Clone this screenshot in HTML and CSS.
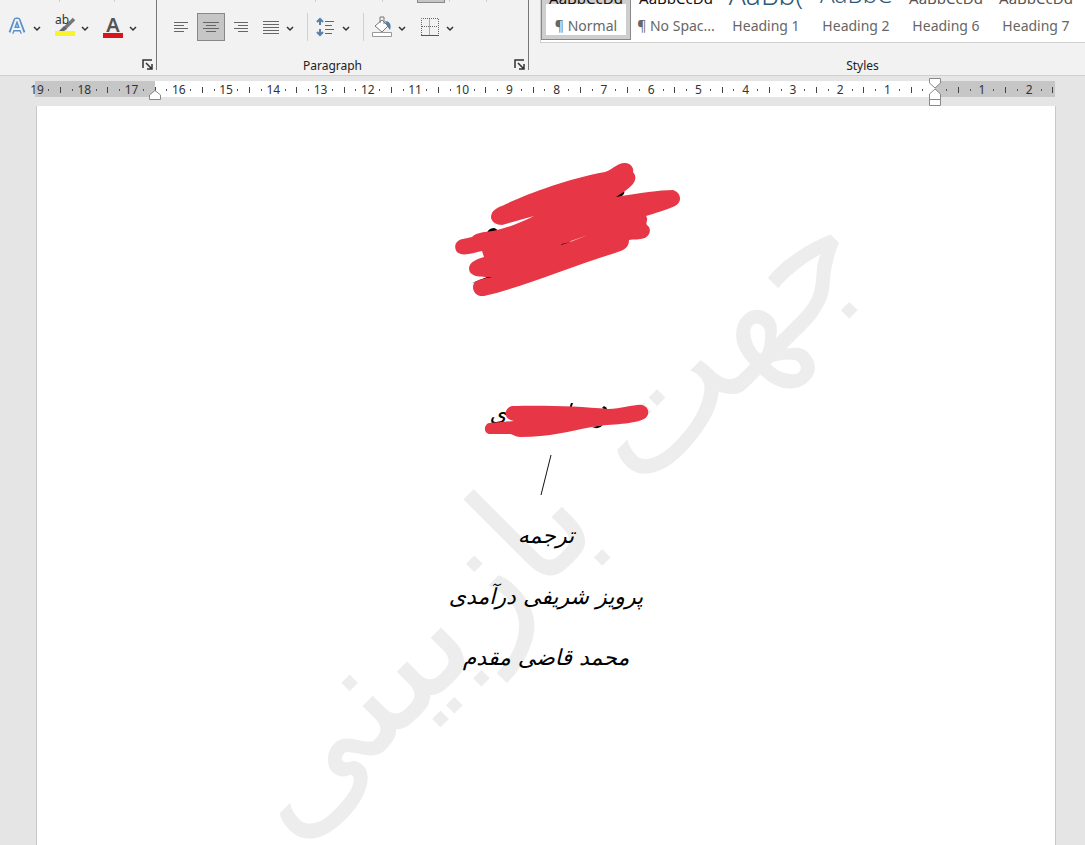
FILE: index.html
```
<!DOCTYPE html>
<html lang="en">
<head>
    <meta charset="utf-8">
    <title>Document</title>
    <link rel="stylesheet" href="styles.css">
</head>
<body>
    <div class="ribbon">
        <section class="group font-group">
            <div class="upper-row"><span></span><span></span></div>
            <div class="tools">
                <button class="tool" aria-label="Text effects">
                    <svg width="22" height="24" viewBox="0 0 22 24"><path d="M5 18 10 5h2l5 13M7 14h8" fill="none" stroke="#5b8fc7" stroke-width="5" stroke-linejoin="round"/><path d="M5 19 10 5h2l5 14M7 14h8" fill="none" stroke="#eef4fa" stroke-width="2"/></svg>
                </button>
                <button class="arrow" aria-label="Text effects options"><svg width="8" height="6" viewBox="0 0 8 6"><path d="M1 1l3 3 3-3"/></svg></button>
                <button class="tool highlight" aria-label="Highlight colour">
                    <span>ab</span>
                    <svg width="22" height="24" viewBox="0 0 22 24"><path d="M20 4 11 13" stroke="#777" stroke-width="3.500"/><path d="M10 11l3 3-3 2H5z" fill="#666"/><path d="M1 16h20v5H1z" fill="#f8f32b"/></svg>
                </button>
                <button class="arrow" aria-label="Highlight options"><svg width="8" height="6" viewBox="0 0 8 6"><path d="M1 1l3 3 3-3"/></svg></button>
                <button class="tool colour" aria-label="Font colour"><span>A</span></button>
                <button class="arrow" aria-label="Font colour options"><svg width="8" height="6" viewBox="0 0 8 6"><path d="M1 1l3 3 3-3"/></svg></button>
            </div>
            <button class="launcher" aria-label="Font settings"><svg width="11" height="11" viewBox="0 0 11 11"><path d="M1 9V1h9M4 4l6 6M10 5v5H5"/></svg></button>
        </section>

        <section class="group paragraph-group">
            <div class="upper-row"><span></span><span></span><button class="pressed" aria-label="Right-to-left text"></button><span></span><span></span></div>
            <div class="tools">
                <button class="align" aria-label="Align left"><svg width="16" height="12" viewBox="0 0 16 12"><path d="M1 1.500h14M1 4.500h10M1 7.500h14M1 10.500h10"/></svg></button>
                <button class="align active" aria-label="Centre"><svg width="16" height="12" viewBox="0 0 16 12"><path d="M0 1.500h16M3 4.500h10M0 7.500h16M3 10.500h10"/></svg></button>
                <button class="align" aria-label="Align right"><svg width="16" height="12" viewBox="0 0 16 12"><path d="M1 1.500h14M5 4.500h10M1 7.500h14M5 10.500h10"/></svg></button>
                <button class="align" aria-label="Justify"><svg width="16" height="14" viewBox="0 0 16 14"><path d="M0 1.500h16M0 4.500h16M0 7.500h16M0 10.500h16M0 13.500h16"/></svg></button>
                <button class="arrow" aria-label="Justify options"><svg width="8" height="6" viewBox="0 0 8 6"><path d="M1 1l3 3 3-3"/></svg></button>
                <span class="divider"></span>
                <button class="tool" aria-label="Line spacing">
                    <svg width="20" height="20" viewBox="0 0 20 20"><path d="M4 3v5M4 12v5M1 5l3-3 3 3M1 15l3 3 3-3" fill="none" stroke="#5580a8" stroke-width="2"/><path d="M9 4.500h9M9 8.500h7M9 12.500h9M9 16.500h7" stroke="#666"/></svg>
                </button>
                <button class="arrow" aria-label="Line spacing options"><svg width="8" height="6" viewBox="0 0 8 6"><path d="M1 1l3 3 3-3"/></svg></button>
                <span class="divider"></span>
                <button class="tool" aria-label="Shading">
                    <svg width="22" height="22" viewBox="0 0 22 22"><path d="M4 10l7-6 6 6-6 6z" fill="#fff" stroke="#777"/><path d="M9 7V1h4v7" fill="none" stroke="#777"/><path d="M14 5c4 0 7 3 5 9l-3-4z" fill="#5580a8"/><path d="M1.500 16.500h19v4h-19z" fill="#fff" stroke="#999"/></svg>
                </button>
                <button class="arrow" aria-label="Shading options"><svg width="8" height="6" viewBox="0 0 8 6"><path d="M1 1l3 3 3-3"/></svg></button>
                <button class="tool" aria-label="Borders">
                    <svg width="18" height="18" viewBox="0 0 18 18"><path d="M.5 17V.5h17V17M8.500.5V17M1 8.500h16" fill="none" stroke="#666" stroke-dasharray="1 1"/><path d="M0 17.500h18" stroke="#555"/></svg>
                </button>
                <button class="arrow" aria-label="Borders options"><svg width="8" height="6" viewBox="0 0 8 6"><path d="M1 1l3 3 3-3"/></svg></button>
            </div>
            <h2>Paragraph</h2>
            <button class="launcher" aria-label="Paragraph settings"><svg width="11" height="11" viewBox="0 0 11 11"><path d="M1 9V1h9M4 4l6 6M10 5v5H5"/></svg></button>
        </section>

        <section class="group styles-group">
            <div class="gallery">
                <button class="style selected"><span class="preview">AaBbCcDd</span>¶ Normal</button>
                <button class="style"><span class="preview">AaBbCcDd</span>¶ No Spac...</button>
                <button class="style"><span class="preview large">AaBb(</span>Heading 1</button>
                <button class="style"><span class="preview medium">AaBbC</span>Heading 2</button>
                <button class="style"><span class="preview pale">AaBbCcDd</span>Heading 6</button>
                <button class="style"><span class="preview pale">AaBbCcDd</span>Heading 7</button>
            </div>
            <h2>Styles</h2>
        </section>
    </div>

    <div class="ruler">
        <div class="scale" id="scale"></div>
        <svg class="indent indent-left" width="12" height="10" viewBox="0 0 12 10"><path d="M.5 9.500V5L6 .5 11.500 5v4.500z"/></svg>
        <svg class="indent indent-right" width="12" height="28" viewBox="0 0 12 28"><path d="M.5.5h11V5L6 10 .5 5zM.5 21.500V16L6 11l5.500 5v5.500zM.5 21.500h11v6H.5z"/></svg>
    </div>

    <main class="page">
        <div class="watermark" dir="rtl" lang="fa">جهت بازبینی</div>
        <svg class="scribble scribble-title" width="226" height="136" viewBox="455 162 226 136">
            <path class="ink" d="M486 235q2-7 8-7 5 1 4 7zM612 197l12-6q2 4-7 7zM472 283l20-8v4z"/>
            <path class="marker" d="M491 218C491 209 498 208 506 204 530 193 567 179 605 172 615 168 618 162 626 163 632 164 634 169 633 172 638 178 635 184 625 191L616 197C640 193 660 190 673 190 682 193 682 203 675 206 664 211 655 213 646 216 649 220 645 223 647 225 652 229 650 235 645 238 639 240 634 239 629 240 629 247 625 250 615 253 570 267 520 288 484 296 475 297 471 289 474 283 478 279 487 278 492 277 480 277 469 277 469 268 470 261 478 259 484 257L482 251C473 253 462 257 457 252 453 246 456 240 463 239L472 237C477 232 486 232 493 231 508 228 522 222 534 216L502 225Q493 225 491 218Z"/>
            <path d="M570 242l18-7-17 6z" fill="#fff"/>
            <path class="ink" d="M561 245l9-3-8 2z"/>
        </svg>
        <div class="document" dir="rtl" lang="fa">
            <p class="author">ی</p>
            <p class="slash" dir="ltr"><svg width="12" height="40" viewBox="0 0 12 40"><path d="M11 0 1 40" stroke="#111"/></svg></p>
            <p>ترجمه</p>
            <p>پرویز شریفی درآمدی</p>
            <p>محمد قاضی مقدم</p>
        </div>
        <svg class="scribble scribble-author" width="166" height="36" viewBox="484 402 166 36">
            <path class="ink" d="M571 403l2 0-2 6h-2zM602 408l2-2 3 2-1 2zM592 427q7 3 11-2z"/>
            <path class="marker" d="M512 406C540 405 580 406 608 409 622 409 635 404 642 405 650 407 650 416 644 419 632 425 605 424 592 427 570 431 550 437 520 437 515 437 513 434 510 434H489C483 433 484 424 489 423L514 421C502 419 504 408 512 406Z"/>
        </svg>
    </main>

    <script>
        var scale = document.getElementById('scale');

        // One mark for every quarter of a centimetre, counted from the right margin.
        for (var quarter = 76; quarter >= -10; quarter--) {
            var mark = document.createElement('span');
            if (quarter % 4 == 0) {
                mark.textContent = quarter == 0 ? '' : Math.abs(quarter / 4);
            }
            else {
                mark.className = quarter % 2 == 0 ? 'half' : 'dot';
            }
            scale.appendChild(mark);
        }
    </script>
</body>
</html>
```
FILE: styles.css
```
* {
    box-sizing: border-box;
}

body {
    display: flex;
    flex-direction: column;
    min-height: 100vh;
    margin: 0;
    overflow: hidden;
    background-color: #e5e5e5;
    font-family: "Noto Sans", sans-serif;
    color: #333;
}

button {
    padding: 0;
    border: 0;
    background: none;
    font-family: inherit;
    color: inherit;
}

.ribbon {
    display: flex;
    height: 76px;
    background-color: #f2f2f2;
    border-bottom: 1px solid #cfcfcf;
}

.group {
    position: relative;
    display: flex;
    flex-direction: column;
    height: 70px;
}

.group h2 {
    margin: auto 0 0;
    font-size: 12px;
    font-weight: 400;
    line-height: 8px;
    color: #222;
    text-align: center;
}

.font-group {
    width: 157px;
    border-right: 1px solid #777;
}

.paragraph-group {
    width: 372px;
    border-right: 1px solid #777;
}

.paragraph-group h2 {
    padding-right: 20px;
}

.styles-group {
    flex: 1;
    min-width: 0;
    padding-left: 11px;
}

.styles-group h2 {
    padding-left: 100px;
}

.upper-row {
    display: grid;
    height: 3px;
}

.upper-row span {
    height: 2px;
    border-right: 1px solid #d0d0d0;
}

.font-group .upper-row {
    grid-template-columns: 60px 55px;
}

.paragraph-group .upper-row {
    grid-template-columns: 159px 67px 62px 5px 37px;
}

.pressed {
    width: 28px;
    height: 3px;
    justify-self: end;
    background-color: #c6c6c6;
    border: 1px solid #888;
    border-top: 0;
}

.tools {
    display: flex;
    align-items: center;
    height: 48px;
}

.font-group .tools {
    padding-left: 6px;
}

.paragraph-group .tools {
    padding-left: 10px;
}

.tool {
    display: flex;
    align-items: center;
    justify-content: center;
    width: 22px;
    height: 28px;
}

.arrow {
    width: 10px;
    height: 28px;
    margin: 0 12px 0 4px;
}

.arrow path, .launcher path {
    fill: none;
    stroke: #333;
    stroke-width: 1.5;
}

.highlight {
    position: relative;
}

.highlight span {
    position: absolute;
    top: 0;
    left: 1px;
    font-size: 12px;
    line-height: 14px;
}

.colour span {
    width: 20px;
    border-bottom: 5px solid #d9141b;
    font-size: 20px;
    font-weight: 600;
    line-height: 16px;
    color: #555;
}

.launcher {
    position: absolute;
    right: 3px;
    bottom: 0;
    height: 11px;
    line-height: 0;
}

.align {
    width: 28px;
    height: 28px;
    margin-right: 2px;
    line-height: 0;
}

.align + .arrow {
    margin-left: -2px;
}

.align path {
    stroke: #666;
}

.active {
    border: 1px solid #888;
    background-color: #c6c6c6;
}

.divider {
    width: 1px;
    height: 28px;
    margin-right: 7px;
    background-color: #d0d0d0;
}

.gallery {
    display: flex;
    height: 43px;
    overflow: hidden;
    background-color: #fff;
    border: 1px solid #d0d0d0;
    border-width: 0 0 1px 1px;
}

.style {
    display: flex;
    flex-direction: column;
    flex: 0 0 90px;
    align-items: center;
    justify-content: flex-end;
    height: 40px;
    padding-bottom: 4px;
    font-size: 14px;
    line-height: 20px;
    color: #666;
    white-space: nowrap;
}

.selected {
    padding-bottom: 3px;
    border: 1px solid #888;
    border-top: 0;
    box-shadow: inset 0 0 0 4px #cecece;
}

.preview {
    flex: none;
    height: 20px;
    margin-bottom: 8px;
    font-size: 15px;
    color: #111;
}

.large, .medium {
    margin-bottom: 12px;
    font-weight: 300;
    color: #2e5878;
}

.large {
    font-size: 28px;
}

.medium {
    font-size: 24px;
}

.pale {
    color: #555;
}

.ruler {
    position: relative;
    margin: 5px 30px 9px 35px;
}

.scale {
    display: flex;
    align-items: center;
    justify-content: space-between;
    height: 16px;
    padding: 0 2px;
    background: linear-gradient(to right, #c6c6c6 11.8%, #fff 11.8% 88.2%, #c6c6c6 88.2%);
    font-size: 12px;
    line-height: 18px;
}

.scale span {
    display: flex;
    justify-content: center;
    width: 0;
    padding-top: 2px;
}

.dot::before {
    content: "";
    flex: none;
    width: 1px;
    height: 2px;
    background-color: #555;
}

.half::before {
    content: "";
    flex: none;
    width: 1px;
    height: 6px;
    background-color: #444;
}

.indent {
    position: absolute;
}

.indent path {
    fill: #fff;
    stroke: #888;
}

.indent-left {
    left: 114px;
    top: 9px;
}

.indent-right {
    right: 114px;
    top: -3px;
}

.page {
    position: relative;
    flex: 1;
    margin: 0 29px 0 36px;
    overflow: hidden;
    background-color: #fff;
    border: 1px solid #c8c8c8;
    border-width: 0 1px;
}

.document {
    position: relative;
    padding-top: 288px;
    font-family: "DejaVu Sans", sans-serif;
    font-size: 22px;
    font-style: italic;
    line-height: 40px;
    color: #000;
    text-align: center;
}

.document p {
    margin: 0 0 21px;
}

.document .author {
    padding-right: 96px;
}

.document .slash {
    height: 40px;
    line-height: 0;
}

.watermark {
    position: absolute;
    top: 408px;
    left: 506px;
    font-family: "DejaVu Sans", sans-serif;
    font-size: 160px;
    line-height: 200px;
    color: #ededed;
    white-space: nowrap;
    transform: translate(-50%, -50%) rotate(-45deg);
}

.scribble {
    position: absolute;
}

.scribble-title {
    top: 56px;
    left: 418px;
}

.scribble-author {
    top: 296px;
    left: 447px;
}

.marker {
    fill: #e73645;
}

.ink {
    fill: #000;
}
```
